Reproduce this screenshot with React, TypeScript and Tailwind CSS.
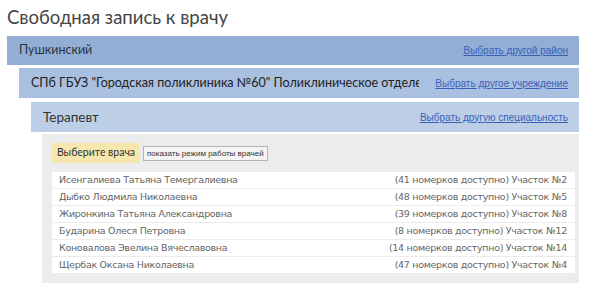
import React from 'react';

interface Doctor {
  name: string;
  info: string;
}

const doctors: Doctor[] = [
  { name: 'Исенгалиева Татьяна Темергалиевна', info: '(41 номерков доступно) Участок №2' },
  { name: 'Дыбко Людмила Николаевна', info: '(48 номерков доступно) Участок №5' },
  { name: 'Жиронкина Татьяна Александровна', info: '(39 номерков доступно) Участок №8' },
  { name: 'Бударина Олеся Петровна', info: '(8 номерков доступно) Участок №12' },
  { name: 'Коновалова Эвелина Вячеславовна', info: '(14 номерков доступно) Участок №14' },
  { name: 'Щербак Оксана Николаевна', info: '(47 номерков доступно) Участок №4' },
];

const linkCls =
  "shrink-0 text-[10px] text-[#3a5fb8] underline font-['Liberation_Sans',sans-serif]";

export default function App() {
  return (
    <div className="w-[600px] h-[299px] bg-white pl-[7px] pr-[21px] font-['Lato',sans-serif] overflow-hidden">
      {/* Page title */}
      <h1 className="h-[36px] pt-[3px] text-[18.5px] leading-[28px] text-[#444]">Свободная запись к врачу</h1>

      {/* District */}
      <div className="h-[29px] bg-[#92aed5] flex items-center justify-between pl-[12px] pr-[11px]">
        <span className="text-[12.5px] text-[#2d3440]">Пушкинский</span>
        <a className={linkCls}>Выбрать другой район</a>
      </div>

      <div className="ml-[12px] mt-[3px]">
        {/* Clinic */}
        <div className="h-[30px] bg-[#aac0e0] flex items-center justify-between pl-[12px] pr-[11px] gap-[16px]">
          <span className="flex-1 min-w-0 text-[12.5px] text-[#222] whitespace-nowrap overflow-hidden">
            СПб ГБУЗ "Городская поликлиника №60" Поликлиническое отделение №76
          </span>
          <a className={linkCls}>Выбрать другое учреждение</a>
        </div>

        <div className="ml-[12px] mt-[4px]">
          {/* Speciality */}
          <div className="h-[30px] bg-[#bccfe7] flex items-center justify-between pl-[12px] pr-[11px]">
            <span className="text-[13.5px] text-[#333]">Терапевт</span>
            <a className={linkCls}>Выбрать другую специальность</a>
          </div>

          {/* Doctor list */}
          <div className="ml-[11px] mt-[2px] bg-[#ececec] pl-[10px] pr-[4px] pt-[9px] pb-[10px] w-[537px]">
            <div className="flex items-center gap-[3px]">
              <div className="h-[20px] w-[88px] bg-[#f6e7ae] flex items-center justify-center whitespace-nowrap text-[10.5px] text-[#333]">
                Выберите врача
              </div>
              <button className="h-[15px] px-[3px] border border-[#b4b4b4] bg-[#f4f4f4] text-[8px] leading-[13px] text-[#333] whitespace-nowrap font-['Liberation_Sans',sans-serif]">
                показать режим работы врачей
              </button>
            </div>

            <div className="mt-[9px] flex flex-col gap-[1px]">
              {doctors.map((d) => (
                <div
                  key={d.name}
                  className="h-[16px] bg-white flex items-center justify-between pl-[7px] pr-[8px] text-[9.5px] text-[#666] font-['DejaVu_Sans',sans-serif] tracking-[-0.3px]"
                >
                  <span>{d.name}</span>
                  <span>{d.info}</span>
                </div>
              ))}
            </div>
          </div>
        </div>
      </div>
    </div>
  );
}
